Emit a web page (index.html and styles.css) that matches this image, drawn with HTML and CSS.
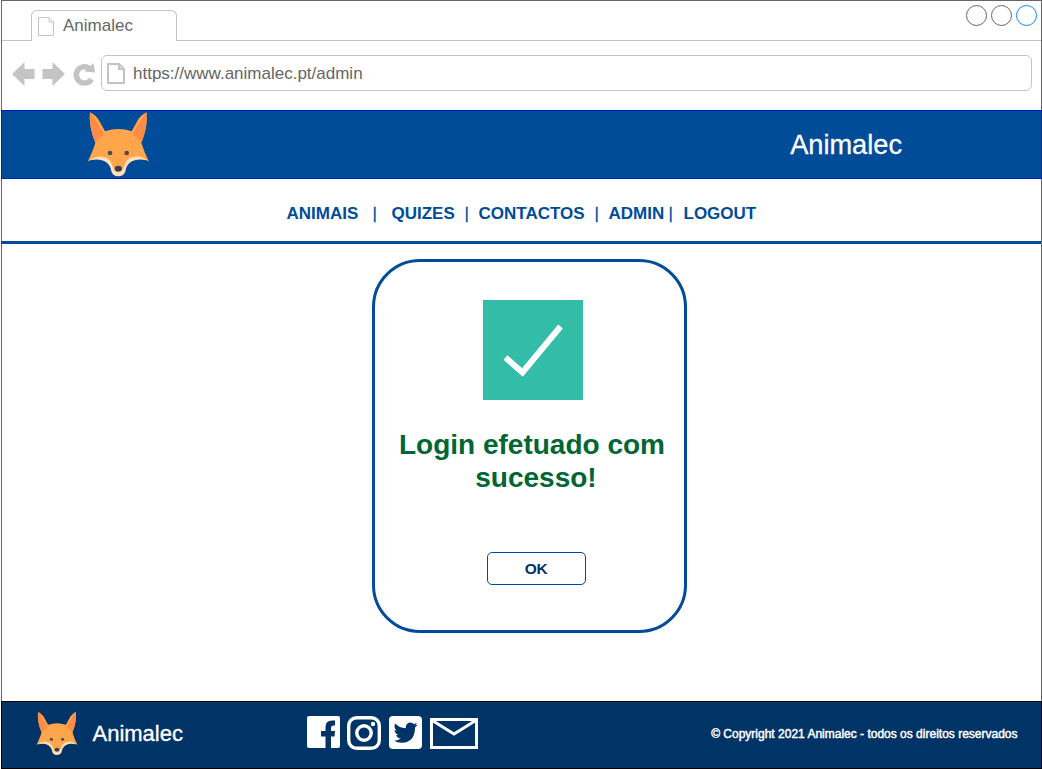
FILE: index.html
```html
<!DOCTYPE html>
<html lang="pt">
<head>
<meta charset="utf-8">
<title>Animalec</title>
<link rel="stylesheet" href="styles.css">
</head>
<body>
<svg width="0" height="0" class="defs">
  <symbol id="fox" viewBox="8 8 188 200">
    <path fill="#ffa64d" d="M17 12Q36 20 48 43L62 69Q102 55 142 69L156 43Q168 20 186 12Q192 50 171 104Q177 120 182 134L194 160L184 154Q150 144 134 158Q124 166 118 190H86Q80 166 70 158Q54 144 20 154L10 160L22 134Q28 120 33 104Q12 50 17 12Z"/>
    <path fill="#ff8c46" d="M17 12Q25 19 38 43Q54 62 59 81Q47 85 33 103Q13 56 17 12ZM186 12Q178 19 165 43Q150 62 145 81Q157 85 171 103Q191 56 186 12Z"/>
    <path fill="#ffe0b8" d="M17 156Q24 147 40 145Q72 142 82 166Q87 181 92 186H112Q117 181 122 166Q132 142 164 145Q180 147 187 156Q160 150 143 159Q126 169 124 186Q120 204 102 204T80 186Q78 169 61 159Q44 150 17 156Z"/>
    <circle cx="77" cy="134" r="7" fill="#4d4a52"/><circle cx="127" cy="134" r="7" fill="#4d4a52"/>
    <ellipse cx="102" cy="181" rx="11" ry="9" fill="#3f3e49"/>
  </symbol>
</svg>
<div class="browser">
  <div class="tabs">
    <div class="tab">
      <svg class="tab-page" viewBox="0 0 16 19"><path d="M.5.5H11L15.500 5V18.500H.5ZM11 .5V5H15.500"/></svg>
      <span>Animalec</span>
    </div>
    <div class="controls"><i></i><i></i><i class="active"></i></div>
  </div>
  <div class="toolbar">
    <svg class="arrows" viewBox="0 0 84 26"><path d="M0 13L12.500 1V8H22.500V18H12.500V25ZM53 13L40.500 1V8H30.500V18H40.500V25Z"/><path class="reload" d="M79.500 18.200A8.200 8.200 0 1 1 77 7"/><path d="M81.500 2L83 11.500L72.500 10.500Z"/></svg>
    <div class="address">
      <svg class="address-page" viewBox="0 0 18 21"><path d="M1 1H12L17 6V20H1ZM12 1V6H17"/></svg>
      <span>https://www.animalec.pt/admin</span>
    </div>
  </div>
  <header class="header">
    <svg class="fox"><use href="#fox"/></svg>
    <span class="brand">Animalec</span>
  </header>
  <nav class="nav">
    <a>ANIMAIS</a><b>|</b><a>QUIZES</a><b>|</b><a>CONTACTOS</a><b>|</b><a>ADMIN</a><b>|</b><a>LOGOUT</a>
  </nav>
  <main class="main">
    <section class="dialog">
      <svg class="check" viewBox="0 0 100 100"><path d="M22.500 57.500L39.500 72.500L77.500 26.500"/></svg>
      <h1 class="message"><span>Login efetuado com</span><br><span class="second">sucesso!</span></h1>
      <button class="ok">OK</button>
    </section>
  </main>
  <footer class="footer">
    <svg class="fox-small"><use href="#fox"/></svg>
    <span class="footer-brand">Animalec</span>
    <div class="social">
      <svg width="33" height="33" viewBox="0 0 33 33"><path fill="#fff" d="M2 0H31Q33 0 33 2V30Q33 32 31 32H24V20.500H27.500L28 15H24V12Q24 9.500 26.500 9.500H28V4.500H25Q18.500 4.500 18.500 11V15H14V20.500H18.500V32H2Q0 32 0 30V2Q0 0 2 0Z"/></svg>
      <svg width="34" height="34" viewBox="0 0 34 34"><g fill="none" stroke="#fff" stroke-width="3.400"><rect x="1.700" y="1.700" width="30.600" height="30.600" rx="8"/><circle cx="17" cy="17" r="7.200"/></g><circle cx="26" cy="8" r="2.200" fill="#fff"/></svg>
      <svg class="twitter" width="33" height="33" viewBox="0 0 33 33"><rect width="33" height="33" rx="4" fill="#fff"/><path fill="#036" d="M28.500 8.500Q27.500 9.200 26 9.200Q27.300 8.400 27.800 6.800Q26.500 7.700 24.900 8Q23.400 6.400 21.300 6.400Q16.500 7 16.700 12.200Q10.500 12 6.200 7.500Q4.200 11.500 7.700 14.500L5.600 13.900Q5.800 17.500 9.500 19.100H7.200Q8.200 22.200 11.900 22.600Q8.700 24.900 4.700 24.600Q9.500 27.500 15.500 26.600Q26 24.500 26 11.500Q27.600 10.300 28.500 8.500Z"/></svg>
      <svg class="mail" width="48" height="31" viewBox="0 0 48 31"><path fill="none" stroke="#fff" stroke-width="3" d="M1.500 1.500H46.500V29.500H1.500ZM1.500 2L24 16L46.500 2"/></svg>
    </div>
    <span class="copyright">© Copyright 2021 Animalec - todos os direitos reservados</span>
  </footer>
</div>
</body>
</html>
```
FILE: styles.css
```css
* { box-sizing: border-box; }
body {
  margin: 0;
  background: #fff;
  font-family: "Liberation Sans", Arial, sans-serif;
  overflow: hidden;
}
.defs { display: none; }
svg { display: block; flex: none; }
span { white-space: nowrap; }
.browser {
  display: flex;
  flex-direction: column;
  width: 1041px;
  height: 769px;
  margin-left: 1px;
  border: 1px solid #666;
}
.tabs { display: flex; height: 40px; flex: none; }
.tabs::before { content: ""; width: 29px; border-bottom: 1px solid #c4c4c4; }
.tab {
  display: flex;
  align-items: center;
  width: 146px;
  height: 31px;
  margin-top: 9px;
  padding: 0 6px 0 7px;
  border: 1px solid #c4c4c4;
  border-bottom: 0;
  border-radius: 6px 6px 0 0;
  color: #666;
  font-size: 17px;
}
.tab-page { width: 16px; height: 19px; margin: 1px 9px 0 -1px; }
.tab-page path, .address-page path { fill: none; stroke: #c4c4c4; }
.controls {
  display: flex;
  flex: 1;
  justify-content: flex-end;
  gap: 4px;
  padding: 4px 4px 0 0;
  border-bottom: 1px solid #c4c4c4;
}
.controls i { width: 21px; height: 21px; border: 1px solid #666; border-radius: 50%; }
.controls .active { border-color: #008cff; }
.toolbar { display: flex; height: 69px; flex: none; padding: 14px 9px 0 10px; }
.arrows { width: 84px; height: 26px; margin: 6px 5px 0 0; fill: #c4c4c4; }
.arrows .reload { fill: none; stroke: #c4c4c4; stroke-width: 5.500px; }
.address {
  display: flex;
  align-items: center;
  flex: 1;
  height: 36px;
  padding-left: 5px;
  border: 1px solid #c4c4c4;
  border-radius: 6px;
  color: #666;
  font-size: 17px;
}
.address span { padding-top: 2px; }
.address-page { width: 18px; height: 21px; margin-right: 8px; }
.address-page path { stroke-width: 2px; }
.header {
  display: flex;
  justify-content: space-between;
  height: 69px;
  flex: none;
  margin: 0 -1px;
  padding: 0 139px 0 84.600px;
  border: 1px solid #001dbc;
  background: #004c99;
}
.fox { width: 62.700px; height: 66.700px; margin-top: -.3px; }
.brand { color: #fff; font-size: 27.200px; line-height: 67px; -webkit-text-stroke: .3px #fff; }
.nav {
  display: grid;
  grid-template-columns: 86px 19px 73px 14px 116px 14px 60px 15px auto;
  height: 65px;
  flex: none;
  margin: 0 0 0 -1px;
  padding: 0 0 0 285.500px;
  border-bottom: 3px solid #004c99;
  color: #004c99;
  font-size: 17px;
  line-height: 69px;
}
.nav a { font-weight: 700; }
.nav b { font-weight: 400; -webkit-text-stroke: .3px #004c99; }
.main { display: flex; flex: 1; padding: 15px 0 0 370px; }
.dialog {
  display: flex;
  flex-direction: column;
  align-items: flex-start;
  width: 315px;
  height: 374px;
  border: 3px solid #004c99;
  border-radius: 48px;
}
.check { width: 100px; height: 100px; margin: 38px 0 0 108px; background: #33bda8; }
.check path { fill: none; stroke: #fff; stroke-width: 6px; }
.message {
  width: 270px;
  margin: 28px 0 0 22px;
  color: #063;
  font-size: 28px;
  line-height: 33px;
  text-align: center;
}
.message .second { margin-left: 8px; }
.ok {
  width: 99px;
  height: 33px;
  margin: 58px 0 0 112px;
  padding: 0 1px 0 0;
  border: 1px solid #004c99;
  border-radius: 5px;
  background: #fff;
  color: #036;
  font: 700 15.500px "Liberation Sans", Arial, sans-serif;
  letter-spacing: -.4px;
}
.footer {
  display: flex;
  align-items: center;
  height: 68px;
  flex: none;
  margin: 0 -1px -1px;
  padding: 0 23.500px 0 34px;
  border: 1px solid #000;
  background: #036;
  color: #fff;
}
.fox-small { width: 42px; height: 45px; margin: -3px 15px 0 -.5px; }
.footer-brand { width: 214.500px; margin-top: -3px; font-size: 22px; -webkit-text-stroke: .3px #fff; }
.social { display: flex; align-items: center; gap: 7px; margin-top: -5px; }
.social .twitter { margin-left: 1px; }
.social .mail { margin: 1px 0 0 1px; }
.copyright { margin: -2px 0 0 auto; font-size: 12px; -webkit-text-stroke: .45px #fff; }
```
